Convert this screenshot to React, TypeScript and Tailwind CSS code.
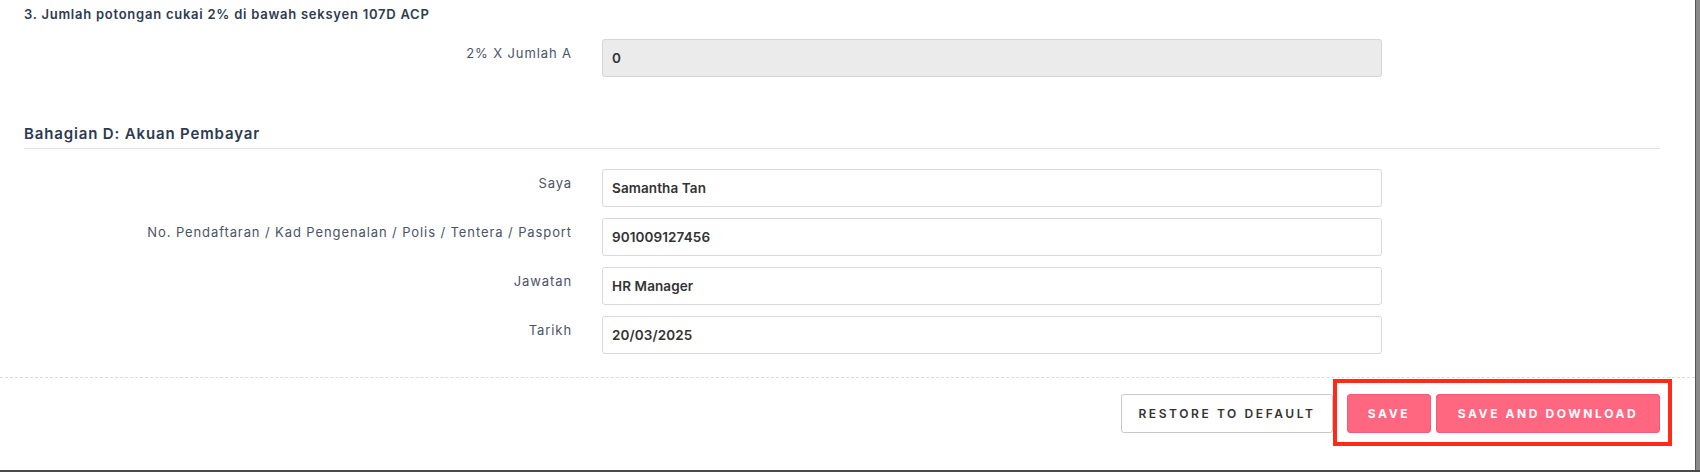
import React from "react";

const rows = [
  { label: "Saya", value: "Samantha Tan" },
  { label: "No. Pendaftaran / Kad Pengenalan / Polis / Tentera / Pasport", value: "901009127456" },
  { label: "Jawatan", value: "HR Manager" },
  { label: "Tarikh", value: "20/03/2025" },
];

function Row({ label, value, readOnly = false }: { label: string; value: string; readOnly?: boolean }) {
  return (
    <div className="flex items-start">
      <div className="w-[548px] pt-[6px] text-right text-[13px] leading-[16px] tracking-[0.9px] text-[#4a5466]">{label}</div>
      <div
        className={
          "ml-[30px] flex h-[38px] w-[780px] items-center rounded-[3px] border px-[9px] text-[13.5px] font-semibold tracking-[0.1px] text-[#333] " +
          (readOnly ? "border-[#d6d6d6] bg-[#ebebeb]" : "border-[#d9d9d9] bg-white")
        }
      >
        {value}
      </div>
    </div>
  );
}

export default function App() {
  return (
    <div className="relative flex h-[472px] w-[1700px] overflow-hidden border-b-2 border-[#4a4a4a] bg-white font-['Inter',sans-serif]">
      <div className="flex flex-1 flex-col">
        <div className="pl-[24px] pr-[35px]">
          <div className="mt-[6px] text-[13px] font-semibold leading-[16px] tracking-[0.75px] text-[#2f3b4e]">
            3. Jumlah potongan cukai 2% di bawah seksyen 107D ACP
          </div>
          <div className="mt-[17px]">
            <Row label="2% X Jumlah A" value="0" readOnly />
          </div>
          <div className="mt-[47px] border-b border-[#e3e3e3] pb-[4px] text-[15px] font-semibold leading-[20px] tracking-[0.85px] text-[#2d3a4f]">
            Bahagian D: Akuan Pembayar
          </div>
          <div className="mt-[20px] flex flex-col gap-[11px]">
            {rows.map((r) => (
              <Row key={r.label} label={r.label} value={r.value} />
            ))}
          </div>
        </div>
        <div className="mt-[23px] border-t border-dashed border-[#dcdcdc]" />
        <div className="mt-[16px] flex justify-end pr-[35px]">
          <button className="flex h-[39px] w-[212px] items-center justify-center rounded-[3px] border border-[#c9c9c9] bg-white text-[12px] font-semibold tracking-[2.6px] text-[#333]">
            RESTORE TO DEFAULT
          </button>
          <button className="ml-[14px] flex h-[39px] w-[84px] items-center justify-center rounded-[3px] border border-[#f25b74] bg-[#ff6680] text-[12px] font-bold tracking-[2.6px] text-white">
            SAVE
          </button>
          <button className="ml-[5px] flex h-[39px] w-[224px] items-center justify-center rounded-[3px] border border-[#f25b74] bg-[#ff6680] text-[12px] font-bold tracking-[2.6px] text-white">
            SAVE AND DOWNLOAD
          </button>
        </div>
      </div>
      <div className="w-[5px] border-l border-[#555] bg-[#8a8a8a]" />
      <div className="pointer-events-none absolute left-[1333px] top-[379px] h-[67px] w-[339px] border-[4px] border-[#ff2a1a]" />
    </div>
  );
}
